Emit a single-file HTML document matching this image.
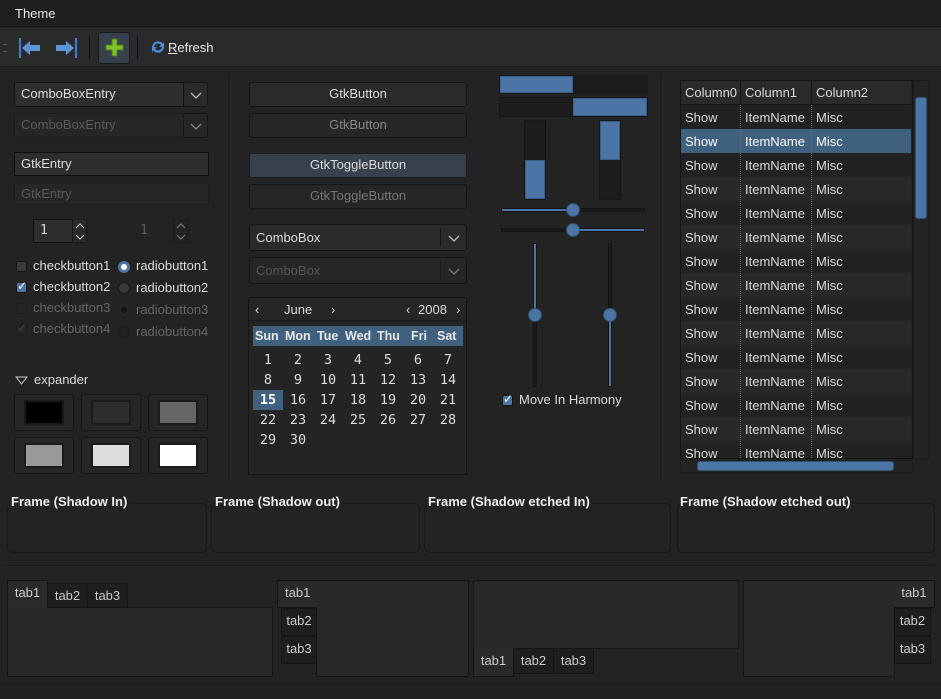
<!DOCTYPE html>
<html><head><meta charset="utf-8"><style>
*{box-sizing:border-box;margin:0;padding:0}
body{width:941px;height:699px;background:#232323;font-family:"Liberation Sans",sans-serif;font-size:13px;color:#dcdcdc;position:relative;overflow:hidden}
.a{position:absolute}
.t{position:absolute;white-space:nowrap;line-height:15px}
.btn{position:absolute;border:1px solid #151515;border-radius:3px;background:#2a2a2a;text-align:center;line-height:22px}
.dis{color:#5a5a5a}
.ent{position:absolute;border:1px solid #141414;background:#2e2e2e;padding-left:6px;line-height:21px}
.frame{position:absolute;border:1px solid #191919;border-radius:6px}
.fl{position:absolute;font-weight:bold;font-size:13px;color:#eee;background:#232323;padding-right:2px;line-height:15px}
.sw{position:absolute;border:1px solid #161616;border-radius:3px;background:#262626}
.sw div{position:absolute;left:9px;top:5px;width:40px;height:25px;border:2px solid #1a1a1a}
.tab{position:absolute;border:1px solid #151515;background:#1e1e1e;text-align:center;line-height:24px;color:#ccc}
.tab.on{background:#2a2a2a}
.pan{position:absolute;border:1px solid #151515;background:#282828;border-radius:2px}
.cb{position:absolute;width:11px;height:11px;border:1px solid #151515;background:#3a3a3a;border-radius:2px}
.rb{position:absolute;width:12px;height:12px;border-radius:50%;background:#3a3a3a;border:1px solid #151515}
.row{position:absolute;left:681px;width:230px;height:24px}
.row span{position:absolute;top:5px;line-height:15px}
</style></head><body>
<div class="a" style="left:0;top:0;width:941px;height:27px;background:#1e1e1e;border-bottom:1px solid #151515"></div>
<div class="t" style="left:15px;top:6px;color:#e8e8e8">Theme</div>
<div class="a" style="left:0;top:28px;width:941px;height:39px;background:#2a2a2a;border-bottom:1px solid #1a1a1a"></div>
<div class="a" style="left:3px;top:44px;width:4px;height:8px;border-top:1px solid #555;border-bottom:1px solid #555"></div>
<svg class="a" style="left:18px;top:36px" width="24" height="24"><rect x="1" y="2" width="2" height="20" fill="#3d7fd0"/><path d="M4 12 L12 5 V9 H22 V15 H12 V19 Z" fill="#5d96d6"/></svg>
<svg class="a" style="left:54px;top:36px" width="24" height="24"><rect x="21" y="2" width="2" height="20" fill="#3d7fd0"/><path d="M20 12 L12 5 V9 H2 V15 H12 V19 Z" fill="#5d96d6"/></svg>
<div class="a" style="left:89px;top:36px;width:1px;height:23px;background:#151515"></div>
<div class="a" style="left:98px;top:32px;width:32px;height:32px;background:#37414d;border:1px solid #1a1a1a;border-radius:3px"></div>
<svg class="a" style="left:105px;top:38px" width="20" height="20"><path d="M7 1 H12 V7 H18 V12 H12 V18 H7 V12 H1 V7 H7 Z" fill="#7fc02e" stroke="#4a7a10"/></svg>
<div class="a" style="left:137px;top:36px;width:1px;height:23px;background:#151515"></div>
<svg class="a" style="left:150px;top:39px" width="16" height="16"><path d="M2 8 A6 6 0 0 1 13 5 L14 2 V8 H9 L11 6 A4 4 0 0 0 4 8 Z" fill="#4a8fd8"/><path d="M14 8 A6 6 0 0 1 3 11 L2 14 V8 H7 L5 10 A4 4 0 0 0 12 8 Z" fill="#4a8fd8"/></svg>
<div class="t" style="left:168px;top:40px;color:#e8e8e8"><u>R</u>efresh</div>

<div class="ent" style="left:14px;top:82px;width:170px;height:25px;border-radius:3px 0 0 3px;background:#2e2e2e">ComboBoxEntry</div>
<div class="btn" style="left:183px;top:82px;width:25px;height:25px"><svg class="a" style="left:6px;top:9px" width="12" height="7"><path d="M1 1 L6 6 L11 1" fill="none" stroke="#bbb" stroke-width="1.3"/></svg></div>
<div class="ent dis" style="left:14px;top:113px;width:170px;height:25px;background:#262626;border-color:#1c1c1c">ComboBoxEntry</div>
<div class="btn" style="left:183px;top:113px;width:25px;height:25px;background:#262626"><svg class="a" style="left:6px;top:9px" width="12" height="7"><path d="M1 1 L6 6 L11 1" fill="none" stroke="#888" stroke-width="1.3"/></svg></div>
<div class="ent" style="left:14px;top:152px;width:195px;height:24px;border-color:#0e0e0e">GtkEntry</div>
<div class="ent dis" style="left:14px;top:182px;width:195px;height:23px;background:#262626;border-color:#1c1c1c">GtkEntry</div>
<div class="ent" style="left:33px;top:219px;width:40px;height:24px;border-color:#111;font-family:'DejaVu Sans Mono',monospace">1</div>
<div class="a" style="left:72px;top:219px;width:15px;height:24px;border:1px solid #181818;background:#2a2a2a"><svg class="a" style="left:2px;top:3px" width="10" height="17"><path d="M1 5 L5 1 L9 5 M1 12 L5 16 L9 12" fill="none" stroke="#bbb" stroke-width="1.2"/></svg></div>
<div class="ent dis" style="left:133px;top:219px;width:41px;height:24px;background:#232323;border-color:#232323;font-family:'DejaVu Sans Mono',monospace">1</div>
<div class="a" style="left:173px;top:219px;width:15px;height:24px;border:1px solid #1c1c1c"><svg class="a" style="left:2px;top:3px" width="10" height="17"><path d="M1 5 L5 1 L9 5 M1 12 L5 16 L9 12" fill="none" stroke="#777" stroke-width="1.2"/></svg></div>

<div class="cb" style="left:16px;top:261px"></div><div class="t" style="left:33px;top:258px">checkbutton1</div>
<div class="cb" style="left:16px;top:282px;background:#4a75a5"></div><div class="t" style="left:17px;top:279px;color:#fff;font-size:12px">✓</div><div class="t" style="left:33px;top:279px">checkbutton2</div>
<div class="cb" style="left:16px;top:303px;background:#252525;border-color:#1e1e1e"></div><div class="t dis" style="left:33px;top:300px;color:#666">checkbutton3</div>
<div class="cb" style="left:16px;top:324px;background:#252525;border-color:#1e1e1e"></div><div class="t" style="left:17px;top:321px;color:#444;font-size:12px">✓</div><div class="t" style="left:33px;top:321px;color:#666">checkbutton4</div>
<div class="rb" style="left:118px;top:261px;background:#fff;border:3px solid #4a75a5"></div><div class="t" style="left:136px;top:258px">radiobutton1</div>
<div class="rb" style="left:118px;top:282px"></div><div class="t" style="left:136px;top:280px">radiobutton2</div>
<div class="rb" style="left:118px;top:304px;background:#151515;border:3px solid #262626"></div><div class="t" style="left:136px;top:302px;color:#666">radiobutton3</div>
<div class="rb" style="left:118px;top:326px;background:#222;border-color:#1c1c1c"></div><div class="t" style="left:136px;top:324px;color:#666">radiobutton4</div>

<svg class="a" style="left:15px;top:376px" width="13" height="9"><path d="M1 1 H12 L6.5 8 Z" fill="none" stroke="#ccc"/></svg>
<div class="t" style="left:34px;top:372px">expander</div>
<div class="sw" style="left:14px;top:394px;width:60px;height:37px"><div style="background:#000"></div></div>
<div class="sw" style="left:81px;top:394px;width:60px;height:37px"><div style="background:#2d2d2d"></div></div>
<div class="sw" style="left:148px;top:394px;width:60px;height:37px"><div style="background:#666"></div></div>
<div class="sw" style="left:14px;top:437px;width:60px;height:37px"><div style="background:#999"></div></div>
<div class="sw" style="left:81px;top:437px;width:60px;height:37px"><div style="background:#ddd"></div></div>
<div class="sw" style="left:148px;top:437px;width:60px;height:37px"><div style="background:#fff"></div></div>

<div class="a" style="left:228px;top:75px;width:1px;height:404px;background:#191919"></div>

<div class="btn" style="left:249px;top:82px;width:218px;height:25px">GtkButton</div>
<div class="btn dis" style="left:249px;top:113px;width:218px;height:25px;background:#262626;color:#888">GtkButton</div>
<div class="btn" style="left:249px;top:153px;width:218px;height:25px;background:#37414d;border-color:#1c1c1c">GtkToggleButton</div>
<div class="btn" style="left:249px;top:184px;width:218px;height:25px;background:#262626;color:#777">GtkToggleButton</div>
<div class="btn" style="left:249px;top:224px;width:218px;height:27px;text-align:left;padding-left:6px;line-height:25px">ComboBox<span class="a" style="right:25px;top:3px;width:1px;height:19px;background:#151515"></span><svg class="a" style="right:6px;top:10px" width="12" height="7"><path d="M1 1 L6 6 L11 1" fill="none" stroke="#bbb" stroke-width="1.3"/></svg></div>
<div class="btn" style="left:249px;top:257px;width:218px;height:27px;text-align:left;padding-left:6px;line-height:25px;background:#262626;color:#555">ComboBox<span class="a" style="right:25px;top:3px;width:1px;height:19px;background:#1a1a1a"></span><svg class="a" style="right:6px;top:10px" width="12" height="7"><path d="M1 1 L6 6 L11 1" fill="none" stroke="#777" stroke-width="1.3"/></svg></div>

<div class="a" style="left:248px;top:297px;width:219px;height:178px;border:1px solid #151515;background:#242424"></div>
<div class="a" style="left:249px;top:298px;width:217px;height:23px;background:#262626;border-bottom:1px solid #1a1a1a"></div>
<div class="t" style="left:255px;top:302px">‹</div><div class="t" style="left:284px;top:302px">June</div><div class="t" style="left:331px;top:302px">›</div>
<div class="t" style="left:406px;top:302px">‹</div><div class="t" style="left:418px;top:302px">2008</div><div class="t" style="left:456px;top:302px">›</div>
<div class="a" style="left:253px;top:326px;width:210px;height:20px;background:#40607f"></div>
<div class="a" style="left:253px;top:390px;width:30px;height:20px;background:#40607f"></div>
<div class="a" style="left:253px;top:329px;width:210px;font-weight:bold;font-size:12.5px;color:#e8e8e8;line-height:15px">
<span class="a" style="left:2px">Sun</span><span class="a" style="left:32px">Mon</span><span class="a" style="left:64px">Tue</span><span class="a" style="left:92px">Wed</span><span class="a" style="left:124px">Thu</span><span class="a" style="left:158px">Fri</span><span class="a" style="left:184px">Sat</span></div>
<div class="a" style="left:253px;top:350px;font-family:'DejaVu Sans Mono',monospace;font-size:13.5px;color:#ddd;line-height:20px">
<div style="display:grid;grid-template-columns:repeat(7,30px);text-align:center">
<span>1</span><span>2</span><span>3</span><span>4</span><span>5</span><span>6</span><span>7</span>
<span>8</span><span>9</span><span>10</span><span>11</span><span>12</span><span>13</span><span>14</span>
<span style="color:#fff;font-weight:bold">15</span><span>16</span><span>17</span><span>18</span><span>19</span><span>20</span><span>21</span>
<span>22</span><span>23</span><span>24</span><span>25</span><span>26</span><span>27</span><span>28</span>
<span>29</span><span>30</span></div></div>

<div class="a" style="left:499px;top:75px;width:149px;height:19px;background:#1c1c1c;border:1px solid #1a1a1a"></div>
<div class="a" style="left:500px;top:76px;width:73px;height:17px;background:#4a75a5;border:1px solid #3a5e86"></div>
<div class="a" style="left:499px;top:97px;width:149px;height:20px;background:#1c1c1c;border:1px solid #151515"></div>
<div class="a" style="left:573px;top:98px;width:74px;height:18px;background:#4a75a5;border:1px solid #3a5e86"></div>
<div class="a" style="left:524px;top:120px;width:22px;height:80px;background:#1c1c1c;border:1px solid #151515"></div>
<div class="a" style="left:525px;top:160px;width:20px;height:39px;background:#4a75a5;border:1px solid #3a5e86"></div>
<div class="a" style="left:599px;top:120px;width:22px;height:80px;background:#1c1c1c;border:1px solid #151515"></div>
<div class="a" style="left:600px;top:121px;width:20px;height:39px;background:#4a75a5;border:1px solid #3a5e86"></div>

<div class="a" style="left:501px;top:208px;width:144px;height:4px;background:#1a1a1a;border:1px solid #141414"></div>
<div class="a" style="left:502px;top:209px;width:71px;height:2px;background:#4a75a5"></div>
<div class="a" style="left:566px;top:203px;width:14px;height:14px;border-radius:50%;background:#4a75a5;border:1px solid #30506f"></div>
<div class="a" style="left:501px;top:228px;width:144px;height:4px;background:#1a1a1a;border:1px solid #141414"></div>
<div class="a" style="left:573px;top:229px;width:71px;height:2px;background:#4a75a5"></div>
<div class="a" style="left:566px;top:223px;width:14px;height:14px;border-radius:50%;background:#4a75a5;border:1px solid #30506f"></div>
<div class="a" style="left:533px;top:243px;width:4px;height:144px;background:#1a1a1a;border:1px solid #141414"></div>
<div class="a" style="left:534px;top:244px;width:2px;height:71px;background:#4a75a5"></div>
<div class="a" style="left:528px;top:308px;width:14px;height:14px;border-radius:50%;background:#4a75a5;border:1px solid #30506f"></div>
<div class="a" style="left:608px;top:243px;width:4px;height:144px;background:#1a1a1a;border:1px solid #141414"></div>
<div class="a" style="left:609px;top:315px;width:2px;height:71px;background:#4a75a5"></div>
<div class="a" style="left:603px;top:308px;width:14px;height:14px;border-radius:50%;background:#4a75a5;border:1px solid #30506f"></div>
<div class="cb" style="left:502px;top:395px;background:#4a75a5"></div><div class="t" style="left:503px;top:392px;color:#fff;font-size:12px">✓</div>
<div class="t" style="left:519px;top:392px">Move In Harmony</div>

<div class="a" style="left:660px;top:75px;width:1px;height:404px;background:#191919"></div>

<div class="a" style="left:680px;top:80px;width:233px;height:379px;background:#222;border:1px solid #141414"></div>
<div class="a" style="left:681px;top:81px;width:230px;height:24px;background:#2a2a2a;border-bottom:1px solid #151515"></div>
<div class="a" style="left:740px;top:81px;width:1px;height:23px;background:#151515"></div>
<div class="a" style="left:811px;top:81px;width:1px;height:23px;background:#151515"></div>
<div class="t" style="left:685px;top:85px">Column0</div><div class="t" style="left:745px;top:85px">Column1</div><div class="t" style="left:816px;top:85px">Column2</div>
<div class="row" style="top:105px;background:#222"><span style="left:4px">Show</span><span style="left:64px">ItemName</span><span style="left:135px">Misc</span></div>
<div class="row" style="top:129px;background:#40607f;color:#fff"><span style="left:4px">Show</span><span style="left:64px">ItemName</span><span style="left:135px">Misc</span></div>
<div class="row" style="top:153px;background:#222"><span style="left:4px">Show</span><span style="left:64px">ItemName</span><span style="left:135px">Misc</span></div>
<div class="row" style="top:177px;background:#282828"><span style="left:4px">Show</span><span style="left:64px">ItemName</span><span style="left:135px">Misc</span></div>
<div class="row" style="top:201px;background:#222"><span style="left:4px">Show</span><span style="left:64px">ItemName</span><span style="left:135px">Misc</span></div>
<div class="row" style="top:225px;background:#282828"><span style="left:4px">Show</span><span style="left:64px">ItemName</span><span style="left:135px">Misc</span></div>
<div class="row" style="top:249px;background:#222"><span style="left:4px">Show</span><span style="left:64px">ItemName</span><span style="left:135px">Misc</span></div>
<div class="row" style="top:273px;background:#282828"><span style="left:4px">Show</span><span style="left:64px">ItemName</span><span style="left:135px">Misc</span></div>
<div class="row" style="top:297px;background:#222"><span style="left:4px">Show</span><span style="left:64px">ItemName</span><span style="left:135px">Misc</span></div>
<div class="row" style="top:321px;background:#282828"><span style="left:4px">Show</span><span style="left:64px">ItemName</span><span style="left:135px">Misc</span></div>
<div class="row" style="top:345px;background:#222"><span style="left:4px">Show</span><span style="left:64px">ItemName</span><span style="left:135px">Misc</span></div>
<div class="row" style="top:369px;background:#282828"><span style="left:4px">Show</span><span style="left:64px">ItemName</span><span style="left:135px">Misc</span></div>
<div class="row" style="top:393px;background:#222"><span style="left:4px">Show</span><span style="left:64px">ItemName</span><span style="left:135px">Misc</span></div>
<div class="row" style="top:417px;background:#282828"><span style="left:4px">Show</span><span style="left:64px">ItemName</span><span style="left:135px">Misc</span></div>
<div class="row" style="top:441px;height:17px;overflow:hidden;background:#222"><span style="left:4px">Show</span><span style="left:64px">ItemName</span><span style="left:135px">Misc</span></div>
<div class="a" style="left:740px;top:105px;height:353px;border-left:1px dotted #666"></div>
<div class="a" style="left:811px;top:105px;height:353px;border-left:1px dotted #666"></div>
<div class="a" style="left:913px;top:80px;width:16px;height:379px;background:#242424;border:1px solid #1c1c1c"></div>
<div class="a" style="left:915px;top:97px;width:12px;height:122px;background:#4a75a5;border:1px solid #30506f;border-radius:3px"></div>
<div class="a" style="left:680px;top:460px;width:233px;height:13px;background:#242424;border:1px solid #1c1c1c"></div>
<div class="a" style="left:697px;top:461px;width:197px;height:10px;background:#4a75a5;border:1px solid #30506f;border-radius:3px"></div>

<div class="frame" style="left:7px;top:503px;width:200px;height:50px"></div><div class="fl" style="left:11px;top:494px">Frame (Shadow In)</div>
<div class="frame" style="left:211px;top:503px;width:209px;height:50px"></div><div class="fl" style="left:215px;top:494px">Frame (Shadow out)</div>
<div class="frame" style="left:424px;top:503px;width:247px;height:50px"></div><div class="fl" style="left:428px;top:494px">Frame (Shadow etched In)</div>
<div class="frame" style="left:677px;top:503px;width:258px;height:50px"></div><div class="fl" style="left:680px;top:494px">Frame (Shadow etched out)</div>
<div class="a" style="left:6px;top:565px;width:929px;height:1px;background:#191919"></div>

<div class="pan" style="left:7px;top:607px;width:266px;height:70px"></div>
<div class="tab on" style="left:7px;top:580px;width:41px;height:28px;border-bottom:none">tab1</div>
<div class="tab" style="left:47px;top:583px;width:41px;height:25px">tab2</div>
<div class="tab" style="left:87px;top:583px;width:41px;height:25px">tab3</div>

<div class="pan" style="left:316px;top:580px;width:153px;height:97px"></div>
<div class="tab on" style="left:277px;top:580px;width:40px;height:28px;border-right:none;text-align:left;padding-left:7px">tab1</div>
<div class="tab" style="left:281px;top:608px;width:36px;height:28px">tab2</div>
<div class="tab" style="left:281px;top:636px;width:36px;height:28px">tab3</div>

<div class="pan" style="left:473px;top:580px;width:266px;height:69px"></div>
<div class="tab on" style="left:473px;top:648px;width:41px;height:29px;border-top:none;line-height:26px">tab1</div>
<div class="tab" style="left:513px;top:648px;width:41px;height:26px">tab2</div>
<div class="tab" style="left:553px;top:648px;width:41px;height:26px">tab3</div>

<div class="pan" style="left:743px;top:580px;width:152px;height:97px"></div>
<div class="tab on" style="left:894px;top:580px;width:41px;height:28px;border-left:none">tab1</div>
<div class="tab" style="left:894px;top:608px;width:37px;height:28px">tab2</div>
<div class="tab" style="left:894px;top:636px;width:37px;height:28px">tab3</div>

<div class="a" style="left:0;top:683px;width:941px;height:16px;background:#222;border-top:1px solid #191919"></div>
</body></html>
